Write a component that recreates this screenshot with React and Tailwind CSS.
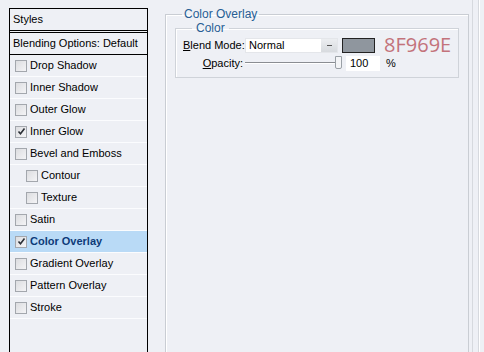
import { useState } from "react";

const styles = [
  { label: "Drop Shadow", checked: false },
  { label: "Inner Shadow", checked: false },
  { label: "Outer Glow", checked: false },
  { label: "Inner Glow", checked: true },
  { label: "Bevel and Emboss", checked: false },
  { label: "Contour", checked: false, sub: true },
  { label: "Texture", checked: false, sub: true },
  { label: "Satin", checked: false },
  { label: "Color Overlay", checked: true, active: true },
  { label: "Gradient Overlay", checked: false },
  { label: "Pattern Overlay", checked: false },
  { label: "Stroke", checked: false },
];

const CheckBox = ({ checked }) => (
  <span className="w-[12px] h-[12px] border border-[#a3a7ad] bg-gradient-to-br from-[#dcdde0] to-[#f4f4f6] flex items-center justify-center shrink-0">
    {checked && (
      <svg width="9" height="9" viewBox="0 0 9 9">
        <path d="M1.5 4.5 L3.5 6.8 L7.5 1.5" stroke="#2b2f36" strokeWidth="1.6" fill="none" />
      </svg>
    )}
  </span>
);

const App = () => {
  const [items, setItems] = useState(styles);

  const toggle = (i) => {
    setItems(items.map((it, idx) => (idx === i ? { ...it, checked: !it.checked } : it)));
  };

  return (
    <div
      className="w-[484px] h-[352px] overflow-hidden bg-[#eef0f5] flex text-[11px] leading-[13px] text-black whitespace-nowrap"
      style={{ fontFamily: "Tahoma, 'Liberation Sans', sans-serif" }}
    >
      {/* styles list */}
      <div className="ml-[9px] mt-[8px] w-[139px] h-[344px] border-l border-r border-t border-black flex flex-col">
        <div className="h-[22px] flex items-center pl-[3px] border-b border-black">Styles</div>
        <div className="h-[23px] flex items-center pl-[3px] border-t border-b border-black mt-[1px]">
          Blending Options: Default
        </div>
        {items.map((it, i) => (
          <div
            key={it.label}
            onClick={() => toggle(i)}
            className={
              "h-[22px] flex items-center gap-[3px] border-b border-[#fbfcfe] " +
              (it.sub ? "pl-[16px] " : "pl-[5px] ") +
              (it.active ? "bg-[#b9daf6] font-bold text-[#0d3a78]" : "")
            }
          >
            <CheckBox checked={it.checked} />
            <span>{it.label}</span>
          </div>
        ))}
      </div>

      {/* settings */}
      <div className="ml-[17px] flex-1 flex">
        <fieldset className="mt-[8px] w-[304px] h-[360px] border border-[#c9cdd3] shadow-[inset_1px_1px_0_#ffffff] px-[9px]">
          <legend className="ml-[7px] px-[2px] text-[#275e94] leading-[13px] text-[12px]">Color Overlay</legend>
          <fieldset className="mt-[1px] h-[56px] border border-[#cfd3d9] shadow-[inset_1px_1px_0_#ffffff] px-[7px]">
            <legend className="ml-[9px] px-[4px] text-[#275e94] leading-[13px] text-[12px]">Color</legend>
            <div className="flex items-center h-[16px] mt-[2px]">
              <span className="w-[62px] text-right pr-[2px]">
                <u>B</u>lend Mode:
              </span>
              <div className="w-[93px] h-[15px] bg-white flex items-center justify-between border border-[#e4e6ea]">
                <span className="pl-[3px]">Normal</span>
                <span className="w-[16px] h-[13px] bg-gradient-to-b from-[#eceef1] to-[#d7dade] flex items-center justify-center">
                  <span className="w-[5px] h-[1px] bg-[#555]" />
                </span>
              </div>
              <span className="ml-[4px] w-[33px] h-[15px] bg-[#8f969e] border border-[#222]" />
              <span className="ml-[9px] text-[20px] leading-[16px] text-[#c3737b]" style={{ fontFamily: "'Open Sans', sans-serif" }}>
                8F969E
              </span>
            </div>
            <div className="flex items-center h-[16px] mt-[2px]">
              <span className="w-[62px] text-right pr-[2px]">
                <u>O</u>pacity:
              </span>
              <div className="relative w-[97px] h-[14px] flex items-center">
                <span className="w-full h-[2px] border-t border-[#8a8d92] border-b border-b-white" />
                <span className="absolute right-[0px] top-0 w-[7px] h-[13px] bg-[#f4f5f7] border border-[#9aa0a6] rounded-b-[2px]" />
              </div>
              <span className="ml-[4px] w-[34px] h-[15px] bg-white pl-[4px] leading-[15px]">100</span>
              <span className="ml-[6px]">%</span>
            </div>
          </fieldset>
        </fieldset>
        <div className="ml-[3px] w-[1px] bg-[#d6d9de]" />
        <div className="ml-[5px] w-[1px] bg-[#d6d9de]" />
        <div className="w-[1px] bg-white" />
      </div>
    </div>
  );
};

export default App;
